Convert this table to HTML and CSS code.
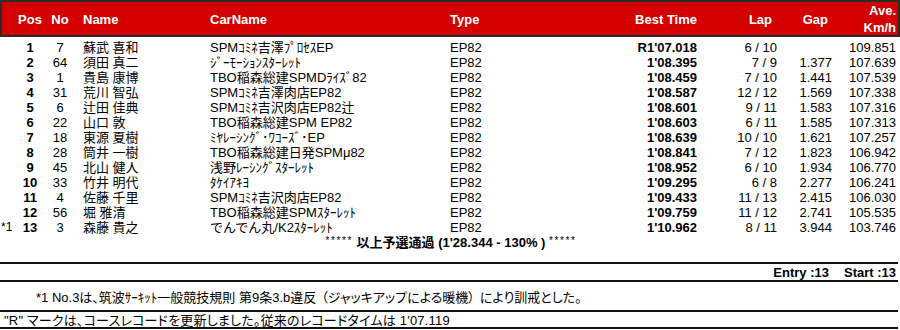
FILE: index.html
```html
<!DOCTYPE html>
<html lang="ja">
<head>
<meta charset="utf-8">
<link rel="stylesheet" href="styles.css">
</head>
<body>
<div class="page">
  <div class="head grid">
    <div></div>
    <div class="c">Pos</div>
    <div class="c">No</div>
    <div>Name</div>
    <div>CarName</div>
    <div>Type</div>
    <div class="r">Best Time</div>
    <div class="r lap-h">Lap</div>
    <div class="r gap-h">Gap</div>
    <div class="r ave">Ave.<br>Km/h</div>
  </div>

  <div class="rows">
    <div class="row grid"><div class="mark"></div><div class="c b">1</div><div class="c">7</div><div class="jp">蘇武 喜和</div><div class="jp">SPMｺﾐﾈ吉澤ﾌﾟﾛｾｽEP</div><div>EP82</div><div class="r b">R1'07.018</div><div class="r">6 / 10</div><div class="r gap"></div><div class="r">109.851</div></div>
    <div class="row grid"><div class="mark"></div><div class="c b">2</div><div class="c">64</div><div class="jp">須田 真二</div><div class="jp">ｼﾞｰﾓｰｼｮﾝｽﾀｰﾚｯﾄ</div><div>EP82</div><div class="r b">1'08.395</div><div class="r">7 / 9</div><div class="r gap">1.377</div><div class="r">107.639</div></div>
    <div class="row grid"><div class="mark"></div><div class="c b">3</div><div class="c">1</div><div class="jp">貴島 康博</div><div class="jp">TBO稲森総建SPMDﾗｲｽﾞ82</div><div>EP82</div><div class="r b">1'08.459</div><div class="r">7 / 10</div><div class="r gap">1.441</div><div class="r">107.539</div></div>
    <div class="row grid"><div class="mark"></div><div class="c b">4</div><div class="c">31</div><div class="jp">荒川 智弘</div><div class="jp">SPMｺﾐﾈ吉澤肉店EP82</div><div>EP82</div><div class="r b">1'08.587</div><div class="r">12 / 12</div><div class="r gap">1.569</div><div class="r">107.338</div></div>
    <div class="row grid"><div class="mark"></div><div class="c b">5</div><div class="c">6</div><div class="jp">辻田 佳典</div><div class="jp">SPMｺﾐﾈ吉沢肉店EP82辻</div><div>EP82</div><div class="r b">1'08.601</div><div class="r">9 / 11</div><div class="r gap">1.583</div><div class="r">107.316</div></div>
    <div class="row grid"><div class="mark"></div><div class="c b">6</div><div class="c">22</div><div class="jp">山口 敦</div><div class="jp">TBO稲森総建SPM EP82</div><div>EP82</div><div class="r b">1'08.603</div><div class="r">6 / 11</div><div class="r gap">1.585</div><div class="r">107.313</div></div>
    <div class="row grid"><div class="mark"></div><div class="c b">7</div><div class="c">18</div><div class="jp">東源 夏樹</div><div class="jp">ﾐﾔﾚｰｼﾝｸﾞ･ﾜｺｰｽﾞ･EP</div><div>EP82</div><div class="r b">1'08.639</div><div class="r">10 / 10</div><div class="r gap">1.621</div><div class="r">107.257</div></div>
    <div class="row grid"><div class="mark"></div><div class="c b">8</div><div class="c">28</div><div class="jp">筒井 一樹</div><div class="jp">TBO稲森総建日発SPMμ82</div><div>EP82</div><div class="r b">1'08.841</div><div class="r">7 / 12</div><div class="r gap">1.823</div><div class="r">106.942</div></div>
    <div class="row grid"><div class="mark"></div><div class="c b">9</div><div class="c">45</div><div class="jp">北山 健人</div><div class="jp">浅野ﾚｰｼﾝｸﾞｽﾀｰﾚｯﾄ</div><div>EP82</div><div class="r b">1'08.952</div><div class="r">6 / 10</div><div class="r gap">1.934</div><div class="r">106.770</div></div>
    <div class="row grid"><div class="mark"></div><div class="c b">10</div><div class="c">33</div><div class="jp">竹井 明代</div><div class="jp">ﾀｹｲｱｷﾖ</div><div>EP82</div><div class="r b">1'09.295</div><div class="r">6 / 8</div><div class="r gap">2.277</div><div class="r">106.241</div></div>
    <div class="row grid"><div class="mark"></div><div class="c b">11</div><div class="c">4</div><div class="jp">佐藤 千里</div><div class="jp">SPMｺﾐﾈ吉沢肉店EP82</div><div>EP82</div><div class="r b">1'09.433</div><div class="r">11 / 13</div><div class="r gap">2.415</div><div class="r">106.030</div></div>
    <div class="row grid"><div class="mark"></div><div class="c b">12</div><div class="c">56</div><div class="jp">堀 雅清</div><div class="jp">TBO稲森総建SPMｽﾀｰﾚｯﾄ</div><div>EP82</div><div class="r b">1'09.759</div><div class="r">11 / 12</div><div class="r gap">2.741</div><div class="r">105.535</div></div>
    <div class="row grid"><div class="mark">*1</div><div class="c b">13</div><div class="c">3</div><div class="jp">森藤 貴之</div><div class="jp">でんでん丸/K2ｽﾀｰﾚｯﾄ</div><div>EP82</div><div class="r b">1'10.962</div><div class="r">8 / 11</div><div class="r gap">3.944</div><div class="r">103.746</div></div>
  </div>

  <div class="qual"><span class="stars">*****</span> 以上予選通過 (1'28.344 - 130% ) <span class="stars">*****</span></div>

  <div class="entry"><span>Entry :13</span><span>Start :13</span></div>
  <div class="note">*1 No.3は、筑波ｻｰｷｯﾄ一般競技規則 第9条3.b違反<span class="paren">（ジャッキアップによる暖機）</span>により訓戒とした。</div>
  <div class="record">"R" マークは、コースレコードを更新しました。従来のレコードタイムは 1'07.119</div>
</div>
</body>
</html>
```

FILE: styles.css
```css
html, body {
  margin: 0;
  padding: 0;
  background: #ffffff;
}

body {
  font-family: "Liberation Sans", "Noto Sans CJK JP", sans-serif;
  font-size: 13px;
  color: #000000;
}

.page {
  width: 900px;
}

.grid {
  display: grid;
  grid-template-columns: 18px 24px 36px 132px 240px 150px 97px 80px 65px 54px;
  align-items: center;
}

.head {
  box-sizing: border-box;
  width: 900px;
  height: 37px;
  background: #d20000;
  border: 2px solid #2b2b2b;
  color: #ffffff;
  font-weight: bold;
  grid-template-columns: 16px 24px 36px 132px 240px 150px 97px 80px 65px 54px;
}

.head > div:nth-child(4) {
  padding-left: 5px;
}

.c { text-align: center; }
.r { text-align: right; white-space: nowrap; }
.b { font-weight: bold; }

.lap-h { padding-right: 5px; }
.gap-h { padding-right: 14px; }
.gap { padding-right: 10px; }

.ave {
  line-height: 17px;
}

.rows {
  margin-top: 3px;
}

.row {
  height: 15px;
  line-height: 15px;
  white-space: nowrap;
}

.row > div:nth-child(4) {
  padding-left: 5px;
}

.mark {
  padding-left: 1px;
  font-size: 12px;
}

.qual {
  height: 15px;
  line-height: 15px;
  text-align: center;
  font-weight: bold;
  padding-left: 2px;
}

.stars {
  font-size: 10px;
  letter-spacing: 1.6px;
  font-weight: normal;
  vertical-align: top;
  line-height: 11px;
}

.entry {
  margin-top: 12px;
  width: 898px;
  box-sizing: border-box;
  border-top: 2px solid #111;
  border-bottom: 2px solid #111;
  height: 20px;
  display: flex;
  justify-content: flex-end;
  align-items: center;
  gap: 15px;
  padding-right: 2px;
  font-weight: bold;
}

.note {
  width: 898px;
  box-sizing: border-box;
  height: 30px;
  border-bottom: 2px solid #111;
  display: flex;
  align-items: center;
  padding-left: 36px;
  font-feature-settings: "palt";
  white-space: nowrap;
}

.paren {
  padding: 0 5px;
}

.record {
  width: 898px;
  box-sizing: border-box;
  height: 17px;
  border-bottom: 2px solid #111;
  display: flex;
  align-items: center;
  padding-left: 4px;
  font-feature-settings: "palt";
  letter-spacing: 0.2px;
  white-space: nowrap;
}
```
